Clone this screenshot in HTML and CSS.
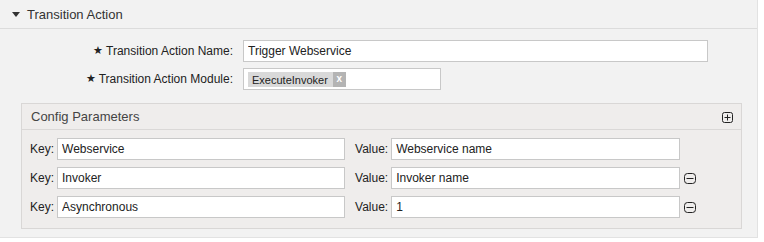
FILE: index.html
```html
<!DOCTYPE html>
<html lang="en">
<head>
  <meta charset="UTF-8" />
  <title>Transition Action</title>
  <link rel="stylesheet" href="styles.css">
</head>
<body>
  <div class="panel">
    <div class="panel-head"><span class="caret"></span>Transition Action</div>
    <div class="panel-body">
      <div class="field">
        <label class="mandatory"><span class="star">&#9733;</span> Transition Action Name:</label>
        <input class="name-input" type="text" value="Trigger Webservice">
      </div>
      <div class="field">
        <label class="mandatory"><span class="star">&#9733;</span> Transition Action Module:</label>
        <div class="module-box">
          <span class="tag">ExecuteInvoker<span class="tag-x">x</span></span>
        </div>
      </div>

      <div class="config">
        <div class="config-head">
          <span>Config Parameters</span>
          <span class="icon-btn">
            <svg width="11" height="11" viewBox="0 0 11 11"><rect x="0.5" y="0.5" width="10" height="10" rx="2" fill="none" stroke="#222"/><path d="M2.5 5.5h6M5.5 2.5v6" stroke="#222"/></svg>
          </span>
        </div>
        <div class="config-body">
          <div class="param-row">
            <label>Key:</label>
            <input class="key-input" type="text" value="Webservice">
            <label class="value-label">Value:</label>
            <input class="value-input" type="text" value="Webservice name">
          </div>
          <div class="param-row">
            <label>Key:</label>
            <input class="key-input" type="text" value="Invoker">
            <label class="value-label">Value:</label>
            <input class="value-input" type="text" value="Invoker name">
            <span class="icon-btn remove">
              <svg width="12" height="11" viewBox="0 0 12 11"><rect x="0.5" y="0.5" width="11" height="10" rx="3" fill="none" stroke="#222"/><path d="M2.5 5.5h7" stroke="#222"/></svg>
            </span>
          </div>
          <div class="param-row">
            <label>Key:</label>
            <input class="key-input" type="text" value="Asynchronous">
            <label class="value-label">Value:</label>
            <input class="value-input" type="text" value="1">
            <span class="icon-btn remove">
              <svg width="12" height="11" viewBox="0 0 12 11"><rect x="0.5" y="0.5" width="11" height="10" rx="3" fill="none" stroke="#222"/><path d="M2.5 5.5h7" stroke="#222"/></svg>
            </span>
          </div>
        </div>
      </div>
    </div>
  </div>
</body>
</html>
```

FILE: styles.css
```css
* {
  margin: 0;
  padding: 0;
  box-sizing: border-box;
}
body {
  font-family: "Liberation Sans", Arial, sans-serif;
  font-size: 12px;
  color: #222;
  background-color: #fff;
}
.panel {
  width: 758px;
  height: 238px;
  background-color: #f2f2f2;
  border-right: 1px solid #e2e2e2;
  border-bottom: 1px solid #e2e2e2;
}
.panel-head {
  height: 29px;
  padding: 0 0 0 12px;
  display: flex;
  align-items: center;
  font-size: 13px;
  color: #333;
  border-bottom: 1px solid #dcdcdc;
}
.caret {
  width: 0;
  height: 0;
  border-left: 4px solid transparent;
  border-right: 4px solid transparent;
  border-top: 5px solid #333;
  margin-right: 7px;
}
.panel-body {
  padding: 11px 0 0 0;
}
.field {
  display: flex;
  align-items: center;
  margin-bottom: 6px;
}
.field label {
  width: 233px;
  text-align: right;
  margin-right: 10px;
  font-size: 12px;
  color: #222;
}
.star {
  font-size: 11px;
  vertical-align: 1px;
}
input {
  font-family: "Liberation Sans", Arial, sans-serif;
  font-size: 12px;
  color: #222;
  height: 22px;
  border: 1px solid #c8c8c8;
  background-color: #fff;
  padding: 0 4px;
  outline: none;
}
.name-input {
  width: 465px;
}
.module-box {
  width: 198px;
  height: 22px;
  border: 1px solid #c8c8c8;
  background-color: #fff;
  padding: 3px 4px;
  display: flex;
}
.tag {
  display: flex;
  align-items: center;
  height: 15px;
  background-color: #d9d9d9;
  padding-left: 4px;
  font-size: 11px;
  color: #222;
}
.tag-x {
  margin-left: 5px;
  width: 13px;
  height: 15px;
  background-color: #b4b4b4;
  color: #fff;
  font-weight: bold;
  font-size: 10px;
  text-align: center;
  line-height: 14px;
}
.config {
  margin: 13px 0 0 21px;
  width: 721px;
  height: 126px;
  background-color: #efedec;
  border: 1px solid #d9d7d6;
}
.config-head {
  height: 26px;
  display: flex;
  align-items: center;
  justify-content: space-between;
  padding: 0 8px 0 9px;
  font-size: 13px;
  color: #444;
  border-bottom: 1px solid #dad8d7;
}
.config-head .icon-btn {
  display: flex;
  margin-top: 2px;
}
.config-body {
  padding: 8px 0 0 8px;
}
.param-row {
  display: flex;
  align-items: center;
  height: 22px;
  margin-bottom: 7px;
}
.param-row label {
  margin-right: 3px;
}
.key-input {
  width: 288px;
}
.value-label {
  margin-left: 10px;
}
.value-input {
  width: 289px;
}
.remove {
  display: flex;
  margin-left: 4px;
}
```
